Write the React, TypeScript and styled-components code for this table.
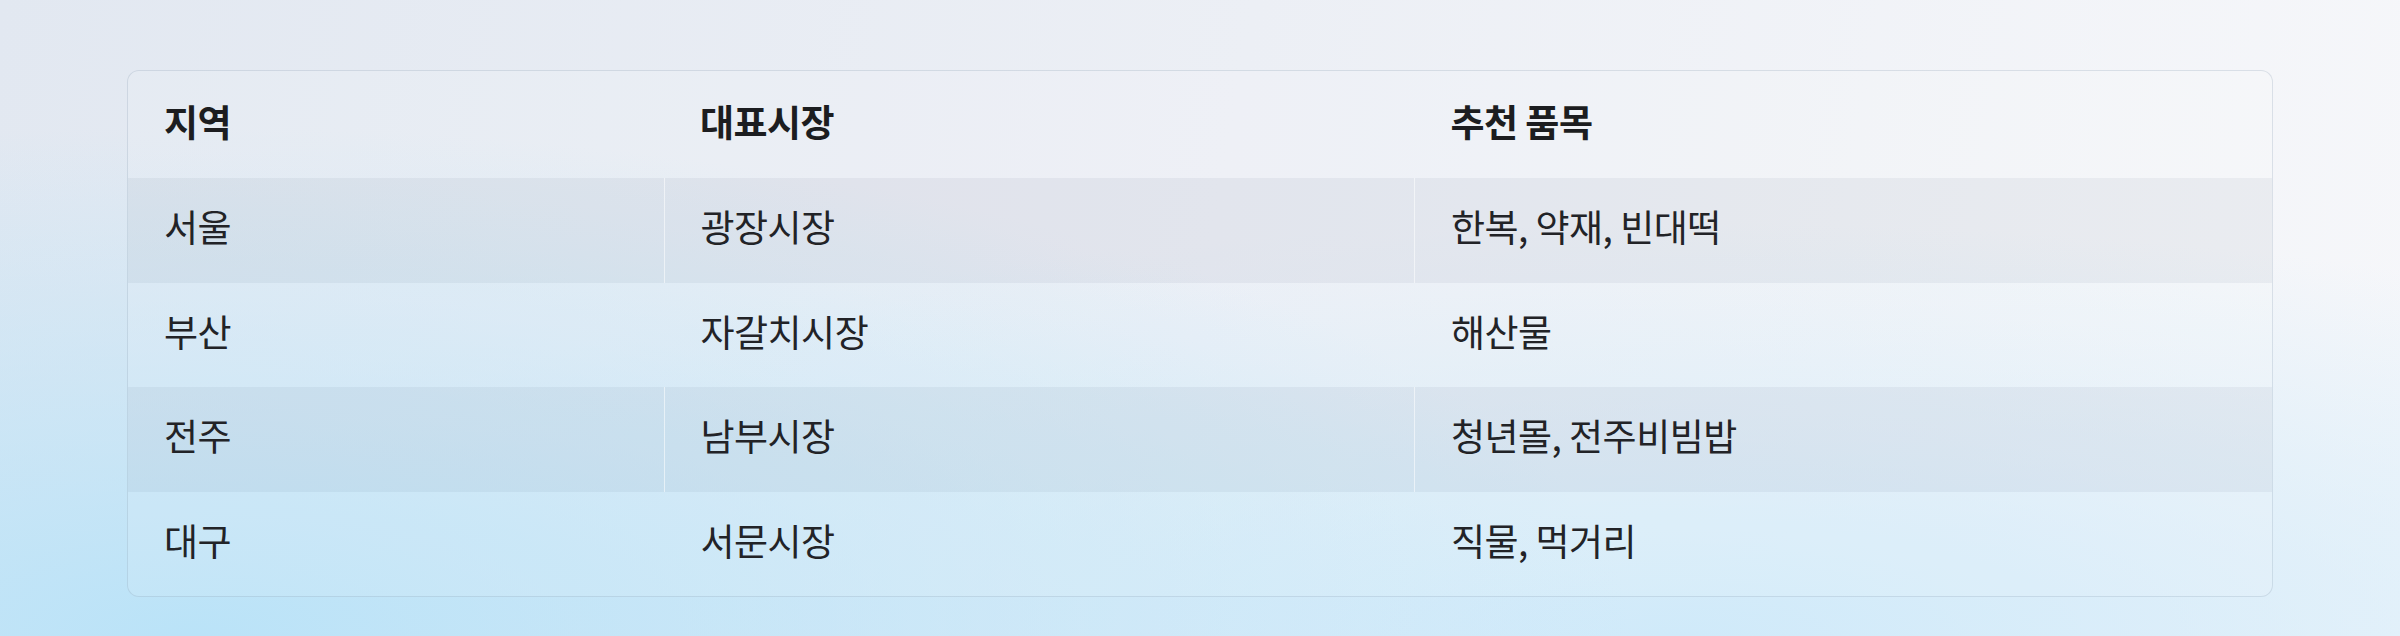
import React from "react";
import styled, { createGlobalStyle } from "styled-components";

const GlobalStyle = createGlobalStyle`
    html, body {
        margin: 0;
        padding: 0;
    }

    body {
        font-family: "Noto Sans CJK KR", "Noto Sans", sans-serif;
        color: #1f2124;
    }
`;

const Page = styled.div`
    min-height: 636px;
    box-sizing: border-box;
    padding: 70px 127px 39px;
    background:
        radial-gradient(ellipse 60% 80% at 8% 100%, rgba(186, 227, 248, 1), rgba(186, 227, 248, 0) 100%),
        radial-gradient(ellipse 65% 65% at 70% 100%, rgba(204, 233, 250, 0.9), rgba(204, 233, 250, 0) 100%),
        linear-gradient(100deg, #e2e8f1 0%, #eceff5 50%, #f6f7fa 100%);
`;

const TableCard = styled.div`
    border: 1px solid rgba(120, 140, 165, 0.22);
    border-radius: 12px;
    overflow: hidden;
    background: rgba(255, 255, 255, 0.1);
`;

const Table = styled.table`
    width: 100%;
    border-collapse: collapse;
    table-layout: fixed;
    font-size: 37px;
    letter-spacing: -0.5px;
`;

const HeadCell = styled.th`
    box-sizing: border-box;
    height: 107px;
    padding: 0 36px 8px;
    text-align: left;
    font-weight: 700;
    color: #1c1d20;
`;

const Row = styled.tr<{ $striped: boolean }>`
    background: ${(p) => (p.$striped ? "rgba(20, 45, 80, 0.05)" : "transparent")};

    & > td + td {
        border-left: 1px solid ${(p) => (p.$striped ? "rgba(255, 255, 255, 0.55)" : "transparent")};
    }
`;

const Cell = styled.td`
    box-sizing: border-box;
    height: 104.5px;
    padding: 0 36px 8px;
    font-weight: 400;
    color: #222327;
`;

const markets = [
    { region: "서울", market: "광장시장", items: "한복, 약재, 빈대떡" },
    { region: "부산", market: "자갈치시장", items: "해산물" },
    { region: "전주", market: "남부시장", items: "청년몰, 전주비빔밥" },
    { region: "대구", market: "서문시장", items: "직물, 먹거리" },
];

const App: React.FC = () => {
    return (
        <>
            <GlobalStyle />
            <Page>
                <TableCard>
                    <Table>
                        <colgroup>
                            <col style={{ width: "25%" }} />
                            <col style={{ width: "35%" }} />
                            <col style={{ width: "40%" }} />
                        </colgroup>
                        <thead>
                            <tr>
                                <HeadCell>지역</HeadCell>
                                <HeadCell>대표시장</HeadCell>
                                <HeadCell>추천 품목</HeadCell>
                            </tr>
                        </thead>
                        <tbody>
                            {markets.map((m, i) => (
                                <Row key={m.region} $striped={i % 2 === 0}>
                                    <Cell>{m.region}</Cell>
                                    <Cell>{m.market}</Cell>
                                    <Cell>{m.items}</Cell>
                                </Row>
                            ))}
                        </tbody>
                    </Table>
                </TableCard>
            </Page>
        </>
    );
};

export default App;
